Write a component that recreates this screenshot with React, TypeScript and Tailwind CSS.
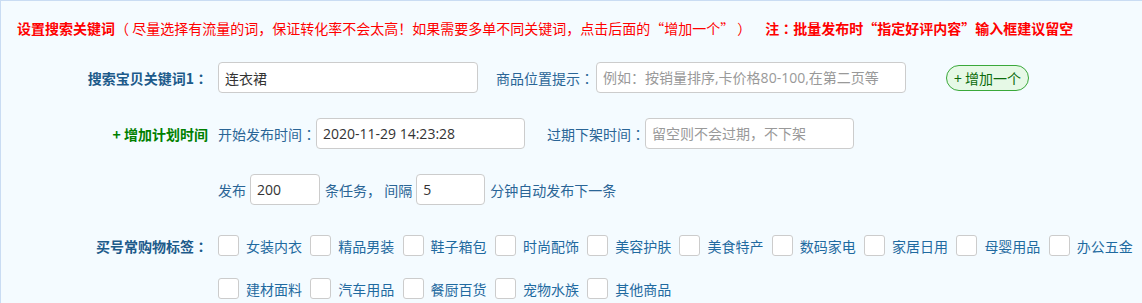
const tags = [
  "女装内衣",
  "精品男装",
  "鞋子箱包",
  "时尚配饰",
  "美容护肤",
  "美食特产",
  "数码家电",
  "家居日用",
  "母婴用品",
  "办公五金",
  "建材面料",
  "汽车用品",
  "餐厨百货",
  "宠物水族",
  "其他商品",
];

const inputCls =
  "h-[31px] rounded-[4px] border border-[#cccccc] bg-white px-[6px] font-['Open_Sans','Noto_Sans_CJK_SC',sans-serif] text-[14px] text-[#333333] placeholder:text-[#999999] outline-none";

// centred full-width colon, as the reference font draws it
const Colon = () => <span className="font-['Noto_Sans_CJK_TC',sans-serif]">：</span>;

function Label({ children, className = "" }: { children?: React.ReactNode; className?: string }) {
  return (
    <div className={`w-[207px] shrink-0 text-right text-[14px] font-bold ${className}`}>{children}</div>
  );
}

export default function App() {
  return (
    <div className="h-[303px] w-[1142px] overflow-hidden border-l border-t border-[#c9dcf3] bg-[#f4fbff] pt-[17px] font-['Noto_Sans_CJK_SC','Noto_Sans',sans-serif] text-[14px] leading-[20px] text-[#2a6596]">
      {/* header note */}
      <div className="flex whitespace-pre pl-[16px] text-[14px] text-[#ff0000]">
        <span className="font-bold">设置搜索关键词</span>
        <span>（ 尽量选择有流量的词，保证转化率不会太高！如果需要多单不同关键词，点击后面的“增加一个” ）</span>
        <span className="ml-[14px] font-bold">
          注<Colon />批量发布时“指定好评内容”输入框建议留空
        </span>
      </div>

      {/* keyword row */}
      <div className="mt-[24px] flex items-center">
        <Label className="text-[#1c5a8a]">
          搜索宝贝关键词1<Colon />
        </Label>
        <input className={`${inputCls} ml-[10px] w-[260px]`} defaultValue="连衣裙" />
        <span className="ml-[18px]">
          商品位置提示<Colon />
        </span>
        <input
          className={`${inputCls} ml-[2px] w-[310px]`}
          placeholder="例如：按销量排序,卡价格80-100,在第二页等"
        />
        <button
          type="button"
          className="ml-[40px] h-[26px] w-[83px] rounded-full border border-[#3aa83a] bg-[#e6f9e6] text-[14px] text-[#0b6b0b]"
        >
          + 增加一个
        </button>
      </div>

      {/* schedule row */}
      <div className="mt-[25px] flex items-center">
        <Label className="text-[#008000]">+ 增加计划时间</Label>
        <span className="ml-[10px]">
          开始发布时间<Colon />
        </span>
        <input className={`${inputCls} w-[209px]`} defaultValue="2020-11-29 14:23:28" />
        <span className="ml-[22px]">
          过期下架时间<Colon />
        </span>
        <input className={`${inputCls} w-[209px]`} placeholder="留空则不会过期，不下架" />
      </div>

      {/* batch row */}
      <div className="mt-[25px] flex items-center">
        <Label />
        <span className="ml-[10px]">发布</span>
        <input className={`${inputCls} ml-[4px] w-[70px]`} defaultValue="200" />
        <span className="ml-[5px] whitespace-pre">条任务， 间隔</span>
        <input className={`${inputCls} ml-[4px] w-[69px]`} defaultValue="5" />
        <span className="ml-[5px]">分钟自动发布下一条</span>
      </div>

      {/* tags */}
      <div className="mt-[30px] flex items-start">
        <Label className="pt-[1px] text-[#1c5a8a]">
          买号常购物标签<Colon />
        </Label>
        <div className="ml-[10px] flex flex-1 flex-wrap gap-x-[8.3px] gap-y-[22px]">
          {tags.map((t) => (
            <label key={t} className="flex h-[21px] items-center">
              <span className="h-[21px] w-[21px] rounded-[3px] border border-[#cccccc] bg-white" />
              <span className="ml-[7px] w-[56px] whitespace-nowrap text-[#1f6aa0]">{t}</span>
            </label>
          ))}
        </div>
      </div>
    </div>
  );
}
